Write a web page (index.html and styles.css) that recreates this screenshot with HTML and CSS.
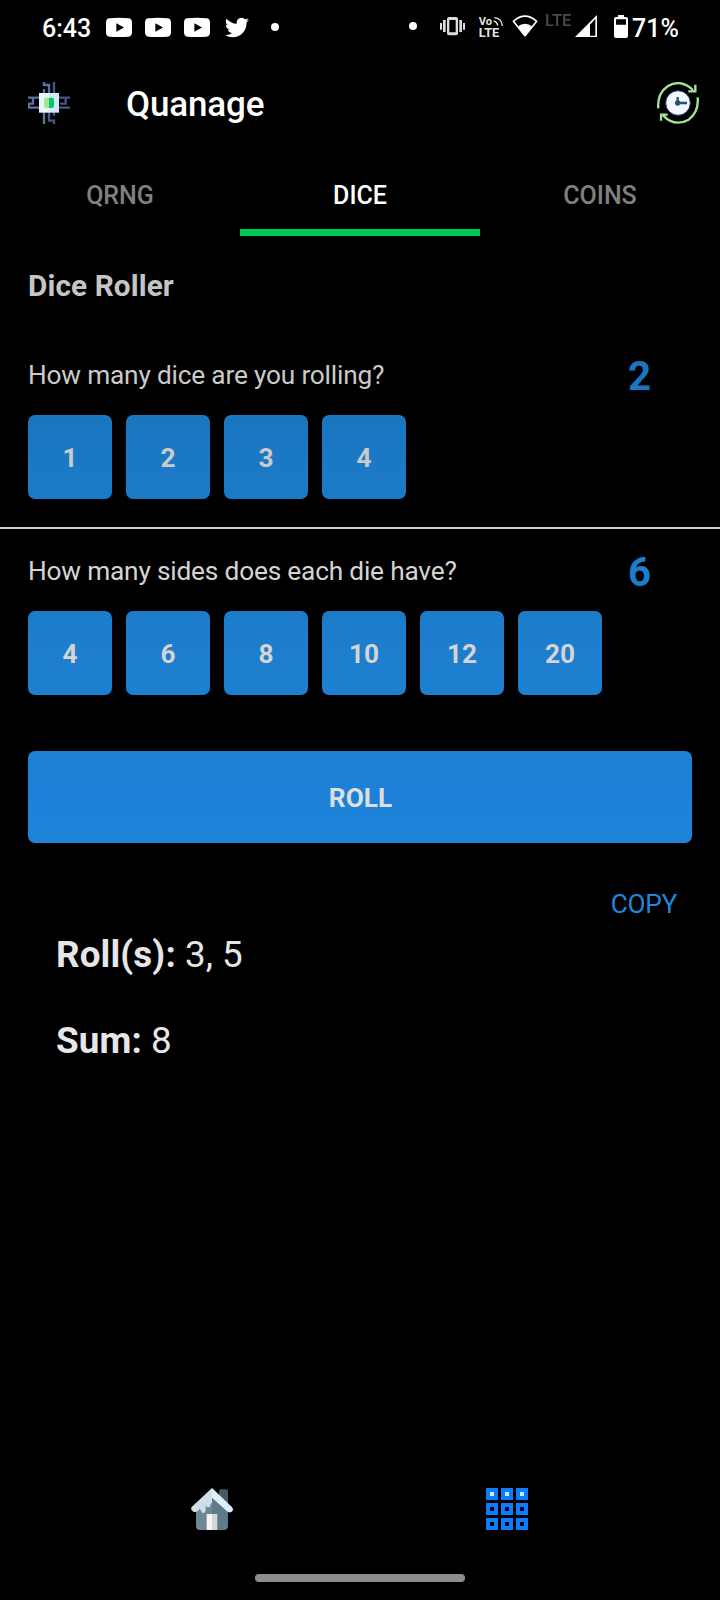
FILE: index.html
```html
<!DOCTYPE html>
<html lang="en">
<head>
<meta charset="utf-8">
<title>Quanage</title>
<link rel="stylesheet" href="styles.css">
</head>
<body>
<div class="screen">
  <div class="status">
    <div class="status-left">
      <span class="clock">6:43</span>
      <svg class="yt" viewBox="318 0 78 168"><path fill="#fff" fill-rule="evenodd" d="M328 55Q357 52 386 55Q395 56 396 66Q397 82 396 99Q395 108 386 110Q357 112 328 110Q319 108 318 99Q317 82 318 66Q319 56 328 55ZM349 70V95L372 82.500Z"/></svg>
      <svg class="yt" viewBox="318 0 78 168"><path fill="#fff" fill-rule="evenodd" d="M328 55Q357 52 386 55Q395 56 396 66Q397 82 396 99Q395 108 386 110Q357 112 328 110Q319 108 318 99Q317 82 318 66Q319 56 328 55ZM349 70V95L372 82.500Z"/></svg>
      <svg class="yt" viewBox="318 0 78 168"><path fill="#fff" fill-rule="evenodd" d="M328 55Q357 52 386 55Q395 56 396 66Q397 82 396 99Q395 108 386 110Q357 112 328 110Q319 108 318 99Q317 82 318 66Q319 56 328 55ZM349 70V95L372 82.500Z"/></svg>
      <svg class="twitter" viewBox="0 -17.500 24 56"><path fill="#fff" d="M23.95 2.600c-.88.39-1.830.65-2.820.77a4.930 4.930 0 0 0 2.160-2.720c-.95.56-2 .97-3.130 1.190a4.920 4.920 0 0 0-8.380 4.480C7.700 6.120 4.070 4.160 1.640 1.170a4.920 4.920 0 0 0 1.520 6.570 4.900 4.900 0 0 1-2.230-.62v.06a4.920 4.920 0 0 0 3.950 4.830 5 5 0 0 1-2.210.08 4.940 4.940 0 0 0 4.600 3.420A9.900 9.900 0 0 1 0 17.540a13.990 13.990 0 0 0 7.550 2.210c9.140 0 14.300-7.720 13.990-14.640.96-.69 1.800-1.560 2.410-2.510z"/></svg>
      <span class="dot"></span>
    </div>
    <div class="status-right">
      <span class="dot"></span>
      <svg class="vibrate" viewBox="240 0 75 168"><g fill="#dcdcdc"><path fill-rule="evenodd" d="M267 51H288Q294 51 294 57V100Q294 106 288 106H267Q261 106 261 100V57Q261 51 267 51ZM268 60V97H287V60Z"/><path d="M240 69h6v20h-6zM249 60h8v36h-8zM298 60h8v36h-8zM309 69h6v20h-6z"/></g></svg>
      <svg class="volte" viewBox="357 0 72 168"><g fill="#e2e2e2"><text x="356" y="75" font-size="31" textLength="40" lengthAdjust="spacingAndGlyphs">Vo</text><text x="356" y="111" font-size="36" textLength="62" lengthAdjust="spacingAndGlyphs">LTE</text></g><path fill="none" stroke="#e2e2e2" stroke-width="4" d="M401 63Q412 66 413 77M403 53Q425 55 427 78"/></svg>
      <svg class="wifi" viewBox="456 0 78 168"><path fill="none" stroke="#fff" stroke-width="5" stroke-linejoin="round" d="M460 64Q495 33 530 64L495 107Z"/><path fill="#fff" d="M472 80Q495 63 518 80L495 109Z"/></svg>
      <svg class="lte" viewBox="556 0 78 168"><text x="556" y="79" font-size="47" fill="#4a4a4a" textLength="79" lengthAdjust="spacingAndGlyphs">LTE</text></svg>
      <svg class="signal" viewBox="645 0 66 168"><path fill="#fff" fill-rule="evenodd" d="M645 111L711 45V111ZM690 74V107H706V56Z"/></svg>
      <svg class="battery" viewBox="762 0 42 168"><path fill="#fff" fill-rule="evenodd" d="M774 45H792V51H798Q804 51 804 57V108Q804 114 798 114H768Q762 114 762 108V57Q762 51 768 51H774ZM768 58V74H798V58Z"/></svg>
      <span class="percent">71%</span>
    </div>
  </div>

  <header class="appbar">
    <svg class="icon" viewBox="24 30 126 126">
      <g fill="none" stroke-width="7"><path stroke="#5d729e" d="M72 30V39H87V64M72 64V51M24 77H60M24 107H60M27 107V95H39V78M72 120V156M87 120V135"/><path stroke="#445788" d="M102 30V64M115 77H133M115 107H150M150 77H137V95H120M87 120V146H102V156M102 120V131"/></g>
      <path fill="#e9f4fd" d="M57 63H88V122H57Z"/><path fill="#d5e7fb" d="M87 63H117V122H87Z"/>
      <path fill="#a3e884" d="M87 77V108H78Q72 108 72 102V83Q72 77 78 77Z"/><path fill="#00c96b" d="M87 77H96Q102 77 102 83V102Q102 108 96 108H87Z"/>
    </svg>
    <h1 class="title">Quanage</h1>
    <svg class="icon" viewBox="36 30 126 126">
      <g fill="none" stroke="#a6e39a" stroke-width="7"><path d="M40 109Q36 65 68 43Q107 19 144 54M151 38V58H130M158 76Q162 120 131 143Q89 166 54 130M48 146V128H68"/></g>
      <circle cx="99" cy="93" r="37" fill="#f1f8ff" stroke="#17384f" stroke-width="3"/><path stroke="#29536f" stroke-width="7" fill="none" d="M98 75V93H126"/><circle cx="98" cy="93" r="8" fill="#29536f"/>
    </svg>
  </header>

  <nav class="tabs">
    <div class="tab">QRNG</div>
    <div class="tab active">DICE</div>
    <div class="tab">COINS</div>
  </nav>

  <main class="content">
    <h2 class="heading">Dice Roller</h2>
    <section class="group first">
      <div class="question"><span>How many dice are you rolling?</span><strong class="value">2</strong></div>
      <div class="tiles"><div class="tile">1</div><div class="tile">2</div><div class="tile">3</div><div class="tile">4</div></div>
    </section>
    <section class="group second">
      <div class="question"><span>How many sides does each die have?</span><strong class="value">6</strong></div>
      <div class="tiles"><div class="tile">4</div><div class="tile">6</div><div class="tile">8</div><div class="tile">10</div><div class="tile">12</div><div class="tile">20</div></div>
    </section>
    <div class="roll">ROLL</div>
    <div class="copy">COPY</div>
    <div class="results">
      <p><b>Roll(s):</b> 3, 5</p>
      <p><b>Sum:</b> 8</p>
    </div>
  </main>

  <footer class="bottom">
    <div class="nav">
      <svg class="icon" viewBox="33 39 126 126">
        <path fill="#455a64" d="M117 49Q117 43 123 43H138Q144 43 144 49V90H117Z"/>
        <path fill="#6f8894" d="M48 100L96 55V165H60Q48 165 48 153Z"/><path fill="#5d7b89" d="M96 55L144 98V153Q144 165 132 165H96Z"/>
        <path fill="#f5f5f5" d="M80 117H96V165H80Z"/><path fill="#d6d6d6" d="M96 117H112V165H96Z"/>
        <path fill="#cfdfe8" d="M96 39V84Q90 86 90 96H79Q78 86 77 92V104Q75 117 66 113Q61 107 60 100Q51 115 40 110Q30 105 35 96Z"/>
        <path fill="#dfeefb" d="M96 39L155 95Q163 104 155 110Q148 115 141 109L96 68Z"/>
      </svg>
      <svg class="icon" viewBox="33 39 126 126"><g fill="none" stroke="#0a7cff" stroke-width="12"><path d="M39 45h24v24H39zM84 45h24v24H84zM129 45h24v24H129zM39 90h24v24H39zM84 90h24v24H84zM129 90h24v24H129zM39 135h24v24H39zM84 135h24v24H84zM129 135h24v24H129z"/></g><path fill="#d5e9ff" d="M45 51h12v12H45zM90 51h12v12H90zM135 51h12v12H135z"/></svg>
    </div>
    <div class="pill"></div>
  </footer>
</div>
</body>
</html>
```
FILE: styles.css
```css
* { box-sizing: border-box; margin: 0; padding: 0; }
body { background: #000; font-family: Roboto, "Liberation Sans", sans-serif; color: #fff; }
svg { display: block; flex: none; }
.screen { width: 720px; height: 1600px; display: flex; flex-direction: column; overflow: hidden; }

.status { height: 56px; display: flex; justify-content: space-between; padding: 0 42px; font-size: 25px; font-weight: 500; line-height: 57px; }
.status-left, .status-right { display: flex; }
.status svg { height: 56px; }
.clock { width: 64px; }
.yt { width: 26px; margin-right: 13px; }
.twitter { width: 24px; margin-left: 2px; }
.dot { width: 8px; height: 8px; margin: 23px 0 0 22px; border-radius: 50%; background: #fff; }
.status-right .dot { margin: 22px 23px 0 0; }
.vibrate { width: 25px; margin-right: 14px; }
.volte { width: 24px; margin-right: 9px; font-weight: 700; }
.wifi { width: 26px; margin-right: 7px; }
.lte { width: 26px; margin-right: 4px; }
.signal { width: 22px; margin-right: 17px; }
.battery { width: 14px; margin-right: 4px; }
.percent { width: 46px; white-space: nowrap; }

.appbar { height: 98px; padding: 26px 21px 0 28px; display: flex; align-items: flex-start; }
.icon { width: 42px; height: 42px; }
.title { flex: 1; margin-left: 56px; font-size: 35px; font-weight: 500; line-height: 46px; letter-spacing: -.15px; }

.tabs { height: 82px; display: grid; grid-template-columns: repeat(3, 1fr); }
.tab { text-align: center; font-size: 25px; font-weight: 500; line-height: 83px; color: #808080; }
.tab.active { color: #fff; background: linear-gradient(#00c853, #00c853) 0 75px / 100% 7px no-repeat; }

.heading { height: 99px; padding-left: 28px; font-size: 29.75px; font-weight: 700; line-height: 100px; letter-spacing: .1px; color: #c5c5c5; }
.question { height: 80px; display: flex; justify-content: space-between; padding: 0 69px 0 28px; font-size: 26.25px; line-height: 80px; letter-spacing: -.19px; }
.value { font-size: 40.25px; line-height: 84px; letter-spacing: 0; }
.tiles { display: flex; gap: 14px; padding-left: 28px; }
.tile { width: 84px; height: 84px; border-radius: 7px; text-align: center; font-size: 26.25px; font-weight: 700; line-height: 86px; }
.first { height: 194px; color: #cacaca; border-bottom: 2px solid #cacaca; }
.first .value { color: #1b76c0; }
.first .tile { background: linear-gradient(#1b76c0, #1b7ac7); }
.second { height: 222px; padding-top: 2px; color: #d4d4d4; }
.second .value { color: #1c7dcb; }
.second .tile { background: linear-gradient(#1c7cca, #1d80d0); }
.roll { height: 92px; margin: 0 28px; padding-left: 1px; border-radius: 7px; background: linear-gradient(#1d80d4, #1d84da); text-align: center; font-size: 26.25px; font-weight: 700; line-height: 94px; color: #dedede; }
.copy { margin-top: 41px; padding-right: 43px; text-align: right; font-size: 26.25px; line-height: 40px; letter-spacing: -.3px; color: #1e87dc; }
.results { padding-left: 56px; margin-top: -12px; font-size: 36.75px; line-height: 86px; color: #e6e6e6; }
.results b { letter-spacing: .15px; }

.bottom { margin-top: auto; height: 112px; display: flex; flex-direction: column; align-items: center; }
.nav { width: 337px; margin-right: 1px; display: flex; justify-content: space-between; }
.pill { width: 210px; height: 8px; margin-top: 44px; border-radius: 4px; background: #8c8c8c; }
```
